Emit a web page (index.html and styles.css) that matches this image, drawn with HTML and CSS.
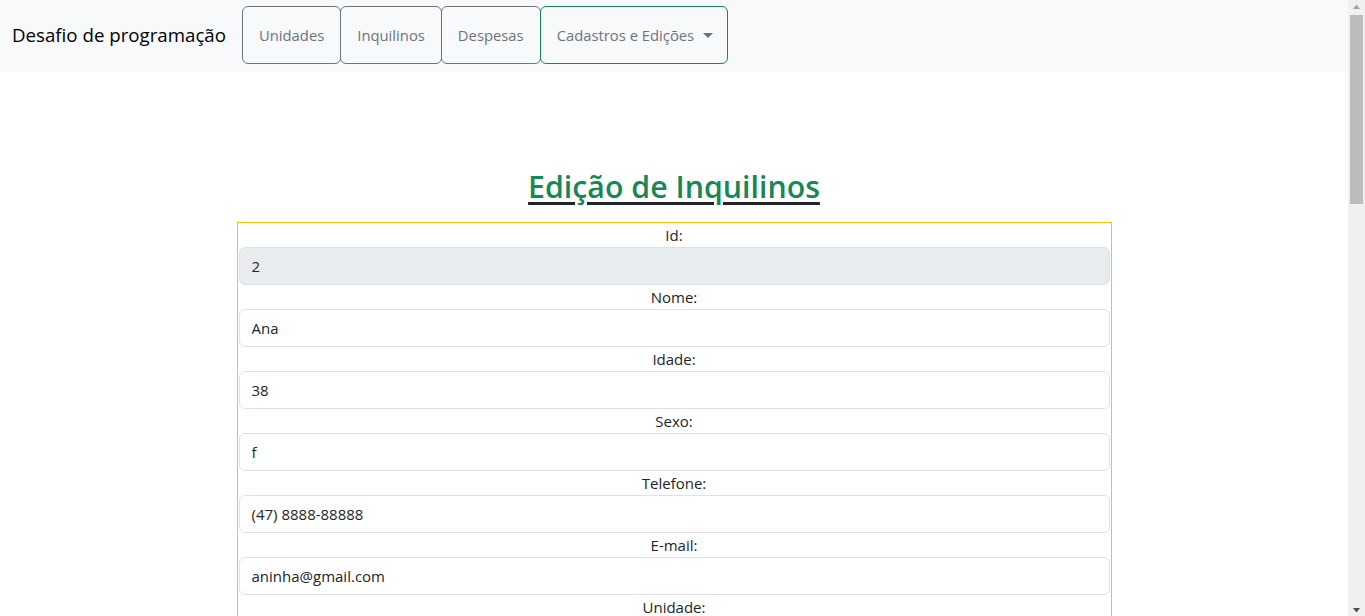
FILE: index.html
```html
<!DOCTYPE html>
<html lang="pt-BR">
<head>
<meta charset="utf-8">
<title>Edição de Inquilinos</title>
<link rel="stylesheet" href="styles.css">
</head>
<body>
<div class="page">
  <nav class="navbar">
    <span class="brand">Desafio de programação</span>
    <div class="nav-buttons">
      <button class="btn btn-secondary">Unidades</button>
      <button class="btn btn-secondary">Inquilinos</button>
      <button class="btn btn-secondary">Despesas</button>
      <button class="btn btn-success">Cadastros e Edições <span class="caret"></span></button>
    </div>
  </nav>
  <main class="container">
    <h1 class="title"><u><span class="title-text">Edição de Inquilinos</span></u></h1>
    <form class="edit-form">
      <label class="field-label">Id:</label>
      <input class="field readonly" value="2" readonly>
      <label class="field-label">Nome:</label>
      <input class="field" value="Ana">
      <label class="field-label">Idade:</label>
      <input class="field" value="38">
      <label class="field-label">Sexo:</label>
      <input class="field" value="f">
      <label class="field-label">Telefone:</label>
      <input class="field" value="(47) 8888-88888">
      <label class="field-label">E-mail:</label>
      <input class="field" value="aninha@gmail.com">
      <label class="field-label">Unidade:</label>
      <input class="field" value="1">
      <div class="actions"><button type="button" class="btn-save">Salvar</button></div>
    </form>
  </main>
</div>
<div class="scrollbar" aria-hidden="true">
  <div class="sb-arrow">
    <svg width="17" height="15" viewBox="0 0 17 15"><path d="M5 9h7L8.5 4.5z" fill="#a3a3a3"/></svg>
  </div>
  <div class="sb-track">
    <div class="sb-thumb"></div>
  </div>
  <div class="sb-arrow">
    <svg width="17" height="15" viewBox="0 0 17 15"><path d="M5 7h7L8.5 11.5z" fill="#505050"/></svg>
  </div>
</div>
</body>
</html>
```
FILE: styles.css
```css
* { box-sizing: border-box; }
html, body { margin: 0; padding: 0; }
body {
  font-family: "Open Sans", "Noto Sans", sans-serif;
  font-size: 15px;
  line-height: 24px;
  color: #212529;
  background: #fff;
  display: flex;
  align-items: flex-start;
}
.page { flex: 1; min-width: 0; }
.scrollbar {
  flex: none;
  width: 17px;
  height: 616px;
  position: sticky;
  top: 0;
  background: #f0f0f0;
  display: flex;
  flex-direction: column;
}
.sb-arrow { height: 15px; flex: none; }
.sb-arrow svg { display: block; }
.sb-track { flex: 1; padding: 0 2px; }
.sb-thumb { height: 189px; background: #bcbcbc; }
.navbar {
  display: flex;
  align-items: center;
  background: #f8f9fa;
  padding: 6px 12px 8px 12px;
  height: 72px;
}
.brand {
  font-size: 18.7px;
  line-height: 30px;
  margin-right: 16px;
  color: #000;
}
.nav-buttons { display: flex; }
.btn {
  font-family: inherit;
  font-size: 14.8px;
  line-height: 24px;
  padding: 16px 16px;
  height: 58px;
  background: transparent;
  border: 1px solid #6c757d;
  border-radius: 6px;
  color: #6c757d;
  margin-right: -1px;
}
.btn-success { border-color: #198754; padding-right: 14px; }
.caret {
  display: inline-block;
  margin-left: 5px;
  vertical-align: 3px;
  border-top: 5px solid #6c757d;
  border-left: 5px solid transparent;
  border-right: 5px solid transparent;
}
.container { padding: 96px 0 1100px; display: flex; flex-direction: column; align-items: center; }
.title {
  margin: 0 0 16px 0;
  font-size: 30.3px;
  line-height: 38px;
  font-weight: 600;
  text-align: center;
}
.title u { text-decoration-color: #212529; text-decoration-thickness: 3px; text-underline-offset: 4px; }
.title-text { color: #198754; }
.edit-form {
  width: 875px;
  border: 1px solid #ffc107;
  padding: 0 1px 1px 1px;
  display: flex;
  flex-direction: column;
}
.field-label { text-align: center; display: block; height: 24px; }
.field {
  font-family: inherit;
  font-size: 15px;
  line-height: 24px;
  height: 38px;
  padding: 6px 12px;
  border: 1px solid #dee2e6;
  border-radius: 6px;
  color: #212529;
  background: #fff;
  width: 100%;
}
.field.readonly { background: #e9ecef; }
.actions { padding: 16px 0; text-align: center; }
.btn-save {
  font-family: inherit; font-size: 15px; line-height: 24px;
  padding: 6px 12px; background: #198754; color: #fff; border: 1px solid #198754; border-radius: 6px;
}
```
